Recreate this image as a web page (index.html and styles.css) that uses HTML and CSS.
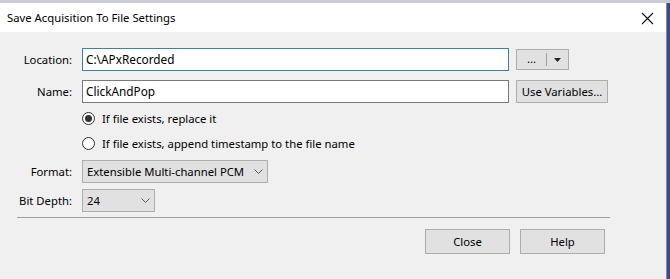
FILE: index.html
```html
<!DOCTYPE html>
<html lang="en">
<head>
  <title>Save Acquisition To File Settings</title>
  <link rel="stylesheet" href="styles.css">
</head>
<body>
<div class="screen">
  <div class="dialog">
    <div class="titlebar">
      <span class="title">Save Acquisition To File Settings</span>
      <span class="close-x">
        <svg width="13" height="13" viewBox="0 0 13 13"><path d="M1 1 L12 12 M12 1 L1 12" stroke="#111" stroke-width="1.1"/></svg>
      </span>
    </div>

    <div class="content">
      <div class="form">
        <label class="label">Location:</label>
        <div class="field">
          <div class="input input--focus">C:\APxRecorded</div>
          <div class="btn btn--split">
            <span class="split-main">...</span>
            <span class="split-arrow"><svg width="7" height="4" viewBox="0 0 7 4"><path d="M0 0 H7 L3.5 4 Z" fill="#222"/></svg></span>
          </div>
        </div>

        <label class="label">Name:</label>
        <div class="field">
          <div class="input">ClickAndPop</div>
          <div class="btn btn--vars">Use Variables...</div>
        </div>

        <span></span>
        <div class="radio-row">
          <span class="radio radio--on"></span>
          <span>If file exists, replace it</span>
        </div>

        <span></span>
        <div class="radio-row">
          <span class="radio"></span>
          <span>If file exists, append timestamp to the file name</span>
        </div>

        <label class="label label--select">Format:</label>
        <div class="field">
          <div class="select select--format">
            <span>Extensible Multi-channel PCM</span>
            <svg width="9" height="5" viewBox="0 0 9 5"><path d="M0.5 0.5 L4.5 4.5 L8.5 0.5" stroke="#555" fill="none"/></svg>
          </div>
        </div>

        <label class="label label--select">Bit Depth:</label>
        <div class="field">
          <div class="select select--depth">
            <span>24</span>
            <svg width="9" height="5" viewBox="0 0 9 5"><path d="M0.5 0.5 L4.5 4.5 L8.5 0.5" stroke="#555" fill="none"/></svg>
          </div>
        </div>
      </div>

      <hr class="separator">

      <div class="actions">
        <div class="btn btn--action">Close</div>
        <div class="btn btn--action">Help</div>
      </div>
    </div>
  </div>
</div>
</body>
</html>
```

FILE: styles.css
```css
body {
  margin: 0;
  font-family: "Noto Sans", "Open Sans", sans-serif;
  font-size: 11.3px;
  color: #000;
}

.screen {
  width: 670px;
  height: 279px;
  overflow: hidden;
  background: #3a4a8a;
  border-top: 3px solid #c9ccd3;
  box-sizing: border-box;
}

.dialog {
  width: 667px;
  height: 276px;
  background: #f0f0f0;
  border-right: 1px solid #8a8a8a;
  box-sizing: border-box;
  white-space: nowrap;
}

.titlebar {
  height: 29px;
  background: #fff;
  display: flex;
  align-items: center;
  justify-content: space-between;
  padding: 0 12px 0 7px;
}

.title {
  font-size: 11.3px;
  margin-top: -1px;
}

.close-x {
  display: flex;
  margin-top: 1px;
}

.content {
  padding: 16px 0 0 0;
}

.form {
  display: grid;
  grid-template-columns: 72px 1fr;
  column-gap: 10px;
  row-gap: 0;
}

.label {
  text-align: right;
  line-height: 23px;
}

.field {
  display: flex;
  align-items: flex-start;
  gap: 7px;
  height: 23px;
}

.field + .label,
.field + .label + .field {
  margin-top: 9px;
}

.input {
  width: 427px;
  height: 23px;
  box-sizing: border-box;
  border: 1px solid #7a7a7a;
  background: #fff;
  padding: 0 3px;
  line-height: 20px;
  font-size: 11.8px;
}

.input--focus {
  border-color: #3c7fb1;
}

.btn {
  background: #e1e1e1;
  border: 1px solid #adadad;
  box-sizing: border-box;
  display: flex;
  align-items: center;
  justify-content: center;
}

.btn--split {
  width: 53px;
  height: 21px;
  margin-top: 1px;
}

.split-main {
  width: 30px;
  text-align: center;
  border-right: 1px solid #a0a0a0;
  height: 13px;
  line-height: 11px;
}

.split-arrow {
  width: 22px;
  display: flex;
  justify-content: center;
}

.btn--vars {
  width: 92px;
  height: 23px;
}

.radio-row {
  display: flex;
  align-items: center;
  gap: 7px;
  height: 25px;
  margin-top: 3px;
}

.radio-row + span + .radio-row {
  margin-top: 0;
}

.radio {
  width: 13px;
  height: 13px;
  box-sizing: border-box;
  border: 1px solid #333;
  border-radius: 50%;
  background: #fff;
  position: relative;
}

.radio--on::after {
  content: "";
  position: absolute;
  left: 2px;
  top: 2px;
  width: 7px;
  height: 7px;
  border-radius: 50%;
  background: #333;
}

.select {
  height: 23px;
  box-sizing: border-box;
  border: 1px solid #adadad;
  background: #e1e1e1;
  display: flex;
  align-items: center;
  justify-content: space-between;
  padding: 0 4px 0 4px;
}

.select--format {
  width: 186px;
}

.select--depth {
  width: 73px;
}

.form > .label--select:nth-last-of-type(2) {
  margin-top: 4px;
}

.form > .label--select:nth-last-of-type(2) + .field {
  margin-top: 4px;
}

.form > .label--select:last-of-type,
.form > .label--select:last-of-type + .field {
  margin-top: 6px;
}

.separator {
  margin: 5px 0 0 17px;
  width: 593px;
  border: 0;
  border-top: 1px solid #a0a0a0;
  height: 0;
}

.actions {
  display: flex;
  justify-content: flex-end;
  gap: 10px;
  padding: 11px 61px 0 0;
}

.btn--action {
  width: 85px;
  height: 25px;
}
```
